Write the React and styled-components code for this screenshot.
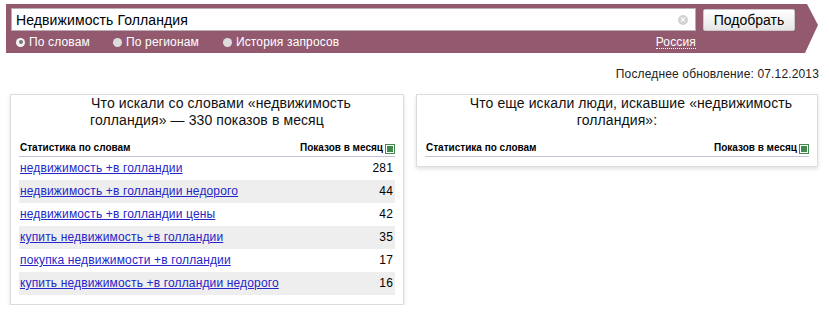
import React from 'react';
import styled, { createGlobalStyle } from 'styled-components';

const GlobalStyle = createGlobalStyle`
  body {
    margin: 0;
    background: #fff;
    font-family: "Liberation Sans", Arial, sans-serif;
  }
`;

const Page = styled.div`
  width: 829px;
  padding: 4px 10px 0 6px;
  box-sizing: border-box;
`;

const Band = styled.div`
  width: 812px;
  height: 49px;
  box-sizing: border-box;
  padding: 4px 0 0 5px;
  background: #935a6f;
  display: flex;
  align-items: flex-start;
  clip-path: polygon(0 0, 801px 0, 812px 21px, 799px 100%, 0 100%);
`;

const SearchCol = styled.div`
  width: 685px;
  display: flex;
  flex-direction: column;
`;

const InputBox = styled.div`
  height: 23px;
  box-sizing: border-box;
  background: #fff;
  border: 1px solid #b9aeb3;
  display: flex;
  align-items: center;
  padding: 0 7px 0 4px;
  font-size: 14px;
  letter-spacing: 0.1px;
  color: #000;
`;

const InputText = styled.span`
  flex: 1;
`;

const ClearIcon = styled.span`
  width: 10px;
  height: 10px;
  border-radius: 50%;
  background: #d2d2d2;
  position: relative;
  &::before, &::after {
    content: '';
    position: absolute;
    left: 2px;
    top: 4.5px;
    width: 6px;
    height: 1px;
    background: #fff;
    transform: rotate(45deg);
  }
  &::after {
    transform: rotate(-45deg);
  }
`;

const Options = styled.div`
  height: 22px;
  display: flex;
  align-items: center;
  padding-left: 5px;
  font-size: 12px;
  letter-spacing: 0.15px;
  color: #fff;
`;

const Option = styled.label`
  display: flex;
  align-items: center;
  gap: 4px;
  margin-right: ${(p) => p.gap || 0}px;
`;

const Radio = styled.span`
  width: 9px;
  height: 9px;
  border-radius: 50%;
  background: ${(p) => (p.checked ? '#f4f4f4' : '#dcdcdc')};
  display: flex;
  align-items: center;
  justify-content: center;
  &::after {
    content: '';
    width: 4px;
    height: 4px;
    border-radius: 50%;
    background: ${(p) => (p.checked ? '#777' : 'transparent')};
  }
`;

const Region = styled.span`
  margin-left: auto;
  border-bottom: 1px dotted #fff;
  line-height: 12px;
`;

const Button = styled.button`
  margin: 1px 0 0 7px;
  width: 92px;
  height: 22px;
  border: 1px solid #c9c9c9;
  border-radius: 2px;
  background: linear-gradient(#ffffff, #e6e6e6);
  font-family: inherit;
  font-size: 14px;
  color: #000;
  padding: 0;
`;

const Updated = styled.div`
  margin-top: 14px;
  text-align: right;
  font-size: 12px;
  letter-spacing: 0.15px;
  line-height: 14px;
  color: #222;
`;

const Cards = styled.div`
  margin: 13px 0 0 4px;
  display: flex;
  align-items: flex-start;
  gap: 12px;
`;

const Card = styled.div`
  width: ${(p) => p.w}px;
  box-sizing: border-box;
  border: 1px solid #dcdcdc;
  box-shadow: 0 2px 4px rgba(0, 0, 0, 0.12);
  padding: 0 8px 9px;
  background: #fff;
`;

const Title = styled.div`
  font-size: 14px;
  line-height: 17px;
  letter-spacing: 0.1px;
  text-align: center;
  text-indent: 28px;
  color: #111;
  padding: 0 14px;
`;

const Head = styled.div`
  display: flex;
  justify-content: space-between;
  align-items: flex-end;
  padding: 13px 0 2px 1px;
  border-bottom: 1px solid #c6c2da;
  font-size: 10px;
  font-weight: bold;
  line-height: 12px;
  color: #000;
`;

const HeadRight = styled.span`
  display: flex;
  align-items: flex-end;
  gap: 2px;
`;

const Row = styled.div`
  display: flex;
  justify-content: space-between;
  height: 23px;
  line-height: 23px;
  padding: 0 2px 0 1px;
  font-size: 12px;
  letter-spacing: 0.15px;
  background: ${(p) => (p.alt ? '#eeeeee' : 'transparent')};
`;

const Link = styled.a`
  color: #2525c8;
  text-decoration: underline;
`;

const Count = styled.span`
  color: #000;
`;

const ExportIcon = () => (
  <svg width="10" height="10" viewBox="0 0 10 10">
    <rect x="0" y="0" width="10" height="10" fill="#3f8a4c" />
    <rect x="1.5" y="1.5" width="7" height="7" fill="none" stroke="#fff" strokeWidth="1" />
    <path d="M3.5 6.5 L6.5 3.5 M4.5 3.5 H6.5 V5.5" stroke="#3f8a4c" strokeWidth="1" fill="none" />
  </svg>
);

const rows = [
  ['недвижимость +в голландии', 281],
  ['недвижимость +в голландии недорого', 44],
  ['недвижимость +в голландии цены', 42],
  ['купить недвижимость +в голландии', 35],
  ['покупка недвижимости +в голландии', 17],
  ['купить недвижимость +в голландии недорого', 16],
];

const TableHead = () => (
  <Head>
    <span>Статистика по словам</span>
    <HeadRight>
      Показов в месяц
      <ExportIcon />
    </HeadRight>
  </Head>
);

const App = () => (
  <Page>
    <GlobalStyle />
    <Band>
      <SearchCol>
        <InputBox>
          <InputText>Недвижимость Голландия</InputText>
          <ClearIcon />
        </InputBox>
        <Options>
          <Option gap={23}>
            <Radio checked />
            По словам
          </Option>
          <Option gap={24}>
            <Radio />
            По регионам
          </Option>
          <Option>
            <Radio />
            История запросов
          </Option>
          <Region>Россия</Region>
        </Options>
      </SearchCol>
      <Button>Подобрать</Button>
    </Band>

    <Updated>Последнее обновление: 07.12.2013</Updated>

    <Cards>
      <Card w={394}>
        <Title>Что искали со словами «недвижимость голландия» — 330 показов в месяц</Title>
        <TableHead />
        {rows.map(([text, n], i) => (
          <Row key={text} alt={i % 2 === 1}>
            <Link href="#">{text}</Link>
            <Count>{n}</Count>
          </Row>
        ))}
      </Card>
      <Card w={402}>
        <Title>Что еще искали люди, искавшие «недвижимость голландия»:</Title>
        <TableHead />
      </Card>
    </Cards>
  </Page>
);

export default App;
